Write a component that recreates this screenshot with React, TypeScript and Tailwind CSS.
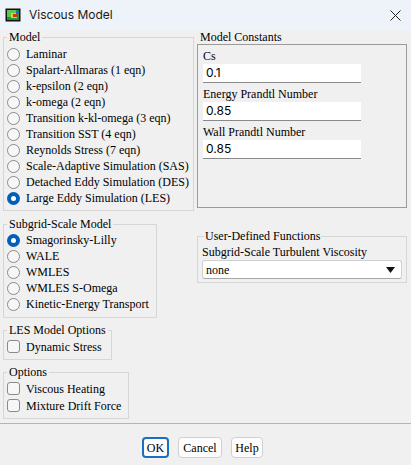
import React from "react";

const serif = "font-['Liberation_Serif',serif]";

function Radio({ label, checked }: { label: string; checked?: boolean }) {
  return (
    <div className="flex h-4 items-center gap-[6px]">
      {checked ? (
        <span className="flex h-[13px] w-[13px] items-center justify-center rounded-full bg-[#005fb8]">
          <span className="h-[5px] w-[5px] rounded-full bg-white" />
        </span>
      ) : (
        <span className="h-[13px] w-[13px] rounded-full border border-[#8a8a8a] bg-[#f7f7f7]" />
      )}
      <span className="whitespace-nowrap">{label}</span>
    </div>
  );
}

function Check({ label }: { label: string }) {
  return (
    <div className="flex h-[17px] items-center gap-[6px]">
      <span className="h-[13px] w-[13px] rounded-[3px] border border-[#8a8a8a] bg-[#f7f7f7]" />
      <span className="whitespace-nowrap">{label}</span>
    </div>
  );
}

function Field({ label, value }: { label: string; value: string }) {
  return (
    <div className="flex flex-col">
      <div className="flex h-[17px] items-center">{label}</div>
      <div className="flex h-[19px] w-[158px] items-center border-b border-[#8a8a8a] bg-white pl-[3px] font-['Inter',sans-serif] text-[12px]">
        {value}
      </div>
    </div>
  );
}

export default function App() {
  return (
    <div className={`h-[465px] w-[411px] overflow-hidden bg-[#f0f0f0] text-[12px] leading-[16px] text-black ${serif}`}>
      {/* Title bar */}
      <div className="flex h-[30px] items-center bg-[#eef3f9] pl-[5px] pr-[10px]">
        <svg width="16" height="14" viewBox="0 0 16 14">
          <rect x="0.5" y="0.5" width="15" height="13" fill="#111" />
          <rect x="2" y="2" width="12" height="10" fill="#1a9a3a" />
          <path d="M2 2h9v3H6v4H2z" fill="#5ec84a" />
          <path d="M6 5h6v5H6z" fill="#e8d020" />
          <path d="M8 6h4v3H8z" fill="#d83020" />
          <path d="M11 3h3v3h-3z" fill="#2a66d0" />
        </svg>
        <span className="ml-[8px] font-['Inter',sans-serif] text-[12px] text-[#1a1a1a]">Viscous Model</span>
        <div className="flex-1" />
        <svg width="11" height="11" viewBox="0 0 11 11">
          <path d="M0.5 0.5L10.5 10.5M10.5 0.5L0.5 10.5" stroke="#222" strokeWidth="1" />
        </svg>
      </div>

      {/* Body */}
      <div className="flex gap-[3px] pl-[3px]">
        {/* Left column */}
        <div className="flex w-[191px] flex-col">
          <fieldset className="border border-[#d6d6d6] px-[3px] pb-[4px]">
            <legend className="px-[2px] leading-[14px]">Model</legend>
            <div className="flex flex-col pt-[2px]">
              <Radio label="Laminar" />
              <Radio label="Spalart-Allmaras (1 eqn)" />
              <Radio label="k-epsilon (2 eqn)" />
              <Radio label="k-omega (2 eqn)" />
              <Radio label="Transition k-kl-omega (3 eqn)" />
              <Radio label="Transition SST (4 eqn)" />
              <Radio label="Reynolds Stress (7 eqn)" />
              <Radio label="Scale-Adaptive Simulation (SAS)" />
              <Radio label="Detached Eddy Simulation (DES)" />
              <Radio label="Large Eddy Simulation (LES)" checked />
            </div>
          </fieldset>

          <fieldset className="mt-[6px] w-[154px] border border-[#d6d6d6] px-[3px] pb-[5px]">
            <legend className="whitespace-nowrap px-[2px] leading-[14px]">Subgrid-Scale Model</legend>
            <div className="flex flex-col pt-[1px]">
              <Radio label="Smagorinsky-Lilly" checked />
              <Radio label="WALE" />
              <Radio label="WMLES" />
              <Radio label="WMLES S-Omega" />
              <Radio label="Kinetic-Energy Transport" />
            </div>
          </fieldset>

          <fieldset className="mt-[5px] w-[108px] border border-[#d6d6d6] px-[3px] pb-[4px]">
            <legend className="whitespace-nowrap px-[2px] leading-[14px]">LES Model Options</legend>
            <div className="pt-[1px]">
              <Check label="Dynamic Stress" />
            </div>
          </fieldset>

          <fieldset className="mt-[5px] w-[126px] border border-[#d6d6d6] px-[3px] pb-[4px]">
            <legend className="whitespace-nowrap px-[2px] leading-[14px]">Options</legend>
            <div className="pt-[1px]">
              <Check label="Viscous Heating" />
              <Check label="Mixture Drift Force" />
            </div>
          </fieldset>
        </div>

        {/* Right column */}
        <div className="flex w-[210px] flex-col">
          <div className="h-[14px] pl-[3px] leading-[14px]">Model Constants</div>
          <div className="flex h-[164px] flex-col gap-[2px] border border-[#9a9a9a] pl-[5px] pt-[2px]">
            <Field label="Cs" value="0.1" />
            <Field label="Energy Prandtl Number" value="0.85" />
            <Field label="Wall Prandtl Number" value="0.85" />
          </div>

          <fieldset className="mt-[21px] border border-[#d6d6d6] pb-[3px] pl-[4px] pr-[4px]">
            <legend className="ml-[2px] whitespace-nowrap px-[1px] leading-[14px]">User-Defined Functions</legend>
            <div className="flex h-[17px] items-center">Subgrid-Scale Turbulent Viscosity</div>
            <div className="flex h-[19px] items-center justify-between rounded-[3px] border border-[#d0d0d0] border-b-[#a8a8a8] bg-white pl-[3px] pr-[6px]">
              <span>none</span>
              <svg width="9" height="6" viewBox="0 0 9 6">
                <path d="M0 0h9L4.5 6z" fill="#111" />
              </svg>
            </div>
          </fieldset>
        </div>
      </div>

      {/* Separator & buttons */}
      <div className="mt-[4px] border-t border-[#b4b4b4]" />
      <div className="flex justify-center gap-[9px] pr-[6px] pt-[13px]">
        <button className="h-[21px] w-[27px] rounded-[4px] border-2 border-[#1c6fc0] bg-[#fdfdfd] leading-none">OK</button>
        <button className="h-[21px] w-[44px] rounded-[4px] border border-[#d0d0d0] bg-[#fdfdfd] leading-none">Cancel</button>
        <button className="h-[21px] w-[32px] rounded-[4px] border border-[#d0d0d0] bg-[#fdfdfd] leading-none">Help</button>
      </div>
    </div>
  );
}
